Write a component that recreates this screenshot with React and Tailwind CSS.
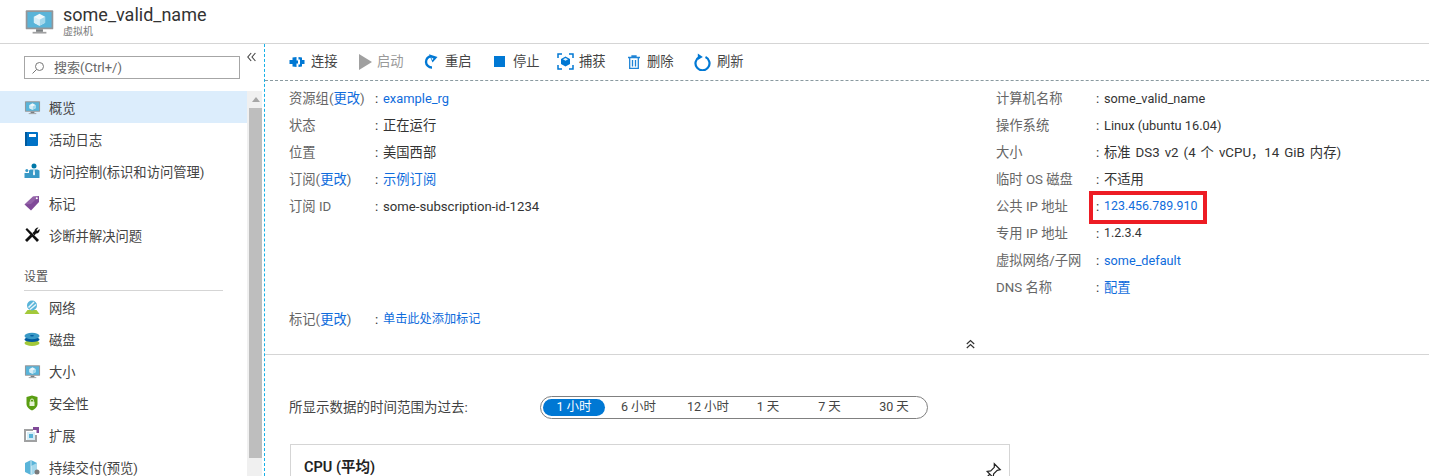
const FONT = "font-['Roboto','Noto_Sans_CJK_SC',sans-serif]";

function VmIcon({ size = 36 }) {
  return (
    <svg width={size} height={size} viewBox="0 0 36 36">
      <rect x="2" y="5" width="32" height="22" rx="1" fill="#949699" />
      <rect x="4" y="7" width="28" height="18" fill="#59b4d9" />
      <path d="M18 9l6.500 3.500v7L18 23l-6.500-3.500v-7z" fill="#fff" opacity=".9" />
      <path d="M18 16l6.500-3.500v7L18 23z" fill="#a5d8ec" />
      <path d="M18 16v7l-6.500-3.500v-7z" fill="#d7eef7" />
      <rect x="14" y="27" width="8" height="3" fill="#7a7e81" />
      <rect x="10" y="30" width="16" height="2" fill="#a0a1a2" />
    </svg>
  );
}

const icons = {
  vm: <VmIcon size={17} />,
  log: (
    <svg width="16" height="16" viewBox="0 0 16 16">
      <rect x="1" y="1" width="13" height="14" rx="1" fill="#0072c6" />
      <rect x="1" y="1" width="2" height="14" fill="#005a9e" />
      <rect x="5" y="3" width="7" height="3" fill="#fff" />
    </svg>
  ),
  iam: (
    <svg width="16" height="16" viewBox="0 0 16 16">
      <circle cx="10" cy="3" r="2.500" fill="#0078a8" />
      <path d="M6.500 6.500h7l2 1v7.500H5V7.500z" fill="#3999c6" />
      <circle cx="2.800" cy="7.500" r="1.500" fill="#3999c6" />
      <path d="M0.500 10h4.500v5H0.500z" fill="#3999c6" />
      <path d="M9.500 6.500h1l.5 5-1 1-1-1z" fill="#fff" />
    </svg>
  ),
  tag: (
    <svg width="16" height="16" viewBox="0 0 16 16">
      <path d="M0.500 9.500L9 1.500l6-.500v6l-8 8.500z" fill="#804998" />
      <path d="M0.500 9.500L9 1.500l6-.500L7 9z" fill="#a67bb8" opacity=".5" />
      <circle cx="12.800" cy="3.200" r="1" fill="#fff" />
    </svg>
  ),
  tools: (
    <svg width="16" height="16" viewBox="0 0 16 16">
      <path d="M1.500 2.500l1.500-1.500 12 12-2 2z" fill="#111" />
      <path d="M1 13l5.500-5.500 2 2L3 15z" fill="#111" />
      <path d="M8.500 6l2-2c0-1.500 1.500-3.500 4-3.500L12.500 3l.7 1L15.500 2c.5 2.500-1 4.500-3.500 4.500L10.500 8.500z" fill="#111" />
    </svg>
  ),
  net: (
    <svg width="16" height="16" viewBox="0 0 16 16">
      <path d="M0.500 15l3-4h9l3 4z" fill="#a3c93a" />
      <circle cx="8" cy="6.500" r="5" fill="#59b4d9" />
      <path d="M4.500 8.500L10 3M6 10.500l6-5" stroke="#e8f5fa" strokeWidth="1.500" />
    </svg>
  ),
  disk: (
    <svg width="16" height="16" viewBox="0 0 16 16">
      <ellipse cx="8" cy="12" rx="7.500" ry="3" fill="#a3c93a" />
      <ellipse cx="8" cy="8.500" rx="7.500" ry="2.500" fill="#005a9e" />
      <ellipse cx="8" cy="5" rx="7.500" ry="3.200" fill="#3999c6" />
      <ellipse cx="8" cy="4.800" rx="2" ry=".8" fill="#005a9e" />
    </svg>
  ),
  shield: (
    <svg width="16" height="16" viewBox="0 0 16 16">
      <path d="M8 .500L13.500 2v7c0 3-3 5.500-5.500 6.500C5.500 14.500 2.500 12 2.500 9V2z" fill="#5a9e12" />
      <rect x="5.500" y="6.500" width="5" height="4.500" rx=".5" fill="#e6f3d4" />
      <path d="M6.500 6.500V5.500a1.500 1.500 0 013 0v1" stroke="#e6f3d4" fill="none" />
    </svg>
  ),
  ext: (
    <svg width="16" height="16" viewBox="0 0 16 16">
      <path d="M0 2h9v2H2v9h9V8h2v7H0z" fill="#a0a1a2" />
      <rect x="3" y="5" width="8" height="8" fill="#d7eef7" />
      <rect x="5" y="7" width="4" height="4" fill="#59b4d9" />
      <path d="M9 0h6v6h-2.500V3H9z" fill="#804998" />
    </svg>
  ),
  cd: (
    <svg width="16" height="16" viewBox="0 0 16 16">
      <path d="M1 4l6-3 6 3v9l-6 3-6-3z" fill="#59b4d9" />
      <path d="M7 7l6-3v9l-6 3z" fill="#a5d8ec" />
      <path d="M7 1v15" stroke="#fff" strokeWidth=".7" />
      <circle cx="13" cy="13" r="2.500" fill="#7a7a7a" />
    </svg>
  ),
};

function NavItem({ icon, label, active }) {
  return (
    <div className={`flex h-8 items-center pl-6 text-[13.3px] text-[#444] ${active ? "bg-[#dcedfc]" : ""}`}>
      <span className="flex w-[25px] shrink-0">{icons[icon]}</span>
      <span className="whitespace-nowrap pt-[4px]">{label}</span>
    </div>
  );
}

function Sidebar() {
  return (
    <aside className="relative flex w-[264px] shrink-0 flex-col overflow-hidden">
      <button className="absolute right-[8px] top-[8px] text-[#444]">
        <svg width="9" height="10" viewBox="0 0 9 10" fill="none" stroke="#444" strokeWidth="1.100">
          <path d="M4.200 1L.8 5l3.400 4M8.400 1L5 5l3.400 4" />
        </svg>
      </button>
      <div className="pb-[12px] pl-6 pr-6 pt-3">
        <div className="flex h-[23px] w-[216px] items-center border border-[#a6a6a6] pl-[6px] text-[13px] text-[#666]">
          <svg width="14" height="14" viewBox="0 0 14 14" fill="none" stroke="#777" strokeWidth="1">
            <circle cx="8.500" cy="5.500" r="4" />
            <path d="M5.500 8.500L1.500 12.500" />
          </svg>
          <span className="ml-[9px]">搜索(Ctrl+/)</span>
        </div>
      </div>
      <div className="flex min-h-0 flex-1">
        <nav className="w-[247px] shrink-0">
          <NavItem icon="vm" label="概览" active />
          <NavItem icon="log" label="活动日志" />
          <NavItem icon="iam" label="访问控制(标识和访问管理)" />
          <NavItem icon="tag" label="标记" />
          <NavItem icon="tools" label="诊断并解决问题" />
          <div className="ml-6 mr-6 mt-[14px] border-b border-[#d5d5d5] pb-[4px] pt-[3px] text-xs leading-[18px] text-[#555]">设置</div>
          <NavItem icon="net" label="网络" />
          <NavItem icon="disk" label="磁盘" />
          <NavItem icon="vm" label="大小" />
          <NavItem icon="shield" label="安全性" />
          <NavItem icon="ext" label="扩展" />
          <NavItem icon="cd" label="持续交付(预览)" />
        </nav>
        <div className="flex w-[15px] flex-col bg-[#f0f0f0]">
          <div className="flex h-[17px] items-center justify-center pl-[2px]">
            <svg width="8" height="5" viewBox="0 0 8 5"><path d="M4 0l4 5H0z" fill="#a6a6a6" /></svg>
          </div>
          <div className="ml-[2px] h-[350px] bg-[#bebebe]" />
        </div>
      </div>
    </aside>
  );
}

function ToolItem({ icon, label, disabled, width }) {
  return (
    <div className={`flex items-center ${width} ${disabled ? "text-[#999]" : "text-[#444]"}`}>
      {icon}
      <span className="pt-[1px]">{label}</span>
    </div>
  );
}

function Toolbar() {
  const blue = "#0078d4";
  return (
    <div className="flex h-[37px] shrink-0 items-center border-b border-dashed border-b-[#8a9aa0] pb-[1px] pl-6 text-[13.3px]">
      <ToolItem
        width="w-[69px]"
        label="连接"
        icon={
          <svg className="mr-[6px]" width="16" height="16" viewBox="0 0 16 16" fill={blue}>
            <path d="M.5 6H3.500V3.500L7.500 3v3.500H9v3H7.500V13l-4-.500V10H.5z" />
            <path d="M15.500 6H13V3.500L9.500 3v2.500h1.500v5H9.500V13l3.500-.500V10h2.500z" />
          </svg>
        }
      />
      <ToolItem
        width="w-[65px]"
        label="启动"
        disabled
        icon={
          <svg className="mr-[4px]" width="15" height="16" viewBox="0 0 15 16" fill="#a0a0a0">
            <path d="M1 0l13 8-13 8z" />
          </svg>
        }
      />
      <ToolItem
        width="w-[71px]"
        label="重启"
        icon={
          <svg className="mr-[6px]" width="16" height="16" viewBox="0 0 16 16" fill="none" stroke={blue} strokeWidth="2.400">
            <path d="M8 2.200A5.800 5.800 0 0 0 3 8a5.800 5.800 0 0 0 6 5.500" />
            <path d="M6 .200L14.500 3 9.500 8.500z" fill={blue} stroke="none" />
            <path d="M8.500 3.500l2 1.200-1.500 1.500z" fill="#fff" stroke="none" />
          </svg>
        }
      />
      <ToolItem
        width="w-[63px]"
        label="停止"
        icon={<span className="mr-[8px] block h-[11px] w-[11px] bg-[#0078d4]" />}
      />
      <ToolItem
        width="w-[71px]"
        label="捕获"
        icon={
          <svg className="mr-[5px]" width="17" height="17" viewBox="0 0 17 17">
            <path d="M1 5V1h4M12 1h4v4M16 12v4h-4M5 16H1v-4" fill="none" stroke={blue} strokeWidth="1.500" />
            <path d="M8.500 3.500l4.500 2.500v5l-4.500 2.500L4 11V6z" fill={blue} />
            <path d="M8.500 5l2.500 1.300-2.500 1.400L6 6.300z" fill="#e6f2fb" />
          </svg>
        }
      />
      <ToolItem
        width="w-[66px]"
        label="删除"
        icon={
          <svg className="mr-[7px]" width="12" height="14" viewBox="0 0 12 14" fill="none" stroke="#1f84d6" strokeWidth="1.300">
            <path d="M0 2.500h12M4 2.500V1h4v1.500M1.700 2.500V13.300h8.600V2.500M4.500 5v6.500M7.500 5v6.500" />
          </svg>
        }
      />
      <ToolItem
        label="刷新"
        icon={
          <svg className="mr-[6px]" width="17" height="18" viewBox="0 0 17 18" fill="none" stroke={blue} strokeWidth="2.200">
            <path d="M5.500 4a7 7 0 1 0 6 0" />
            <path d="M3.800 .5v6.500l5-3z" fill={blue} stroke="none" />
          </svg>
        }
      />
    </div>
  );
}

function Row({ label, value, link, labelW, colonW, valueCls = "", children }) {
  return (
    <div className="relative flex h-[27px] items-center whitespace-nowrap text-[13.3px] text-[#666]">
      <span className={`${labelW} shrink-0`}>{label}</span>
      <span className={`${colonW} shrink-0 text-[#333]`}>:</span>
      <span className={`${link ? "text-[#0f6cdc]" : "text-[#333]"} ${valueCls}`}>{value}</span>
      {children}
    </div>
  );
}

const Change = ({ t }) => (
  <>
    {t}(<span className="text-[#0f6cdc]">更改</span>)
  </>
);

function Essentials() {
  const L = "w-[84px]";
  const LC = "w-[10px] pl-[2px]";
  const R = "w-[100px]";
  const RC = "w-[8px]";
  return (
    <div className="flex shrink-0 flex-col">
      <div className="flex pl-6 pt-[4px]">
        <div className="w-[707px] shrink-0">
          <Row labelW={L} colonW={LC} label={<Change t="资源组" />} value="example_rg" valueCls="text-[12.9px]" link />
          <Row labelW={L} colonW={LC} label="状态" value="正在运行" />
          <Row labelW={L} colonW={LC} label="位置" value="美国西部" />
          <Row labelW={L} colonW={LC} label={<Change t="订阅" />} value="示例订阅" link />
          <Row labelW={L} colonW={LC} label="订阅 ID" value="some-subscription-id-1234" valueCls="text-[13.15px]" />
        </div>
        <div>
          <Row labelW={R} colonW={RC} label="计算机名称" value="some_valid_name" valueCls="text-[12.7px]" />
          <Row labelW={R} colonW={RC} label="操作系统" value="Linux (ubuntu 16.04)" valueCls="text-[12.8px]" />
          <Row labelW={R} colonW={RC} label="大小" value="标准 DS3 v2 (4 个 vCPU，14 GiB 内存)" valueCls="[word-spacing:1.700px]" />
          <Row labelW={R} colonW={RC} label="临时 OS 磁盘" value="不适用" />
          <Row labelW={R} colonW={RC} label="公共 IP 地址" value="123.456.789.910" valueCls="text-[12.4px]" link>
            <span className="absolute left-[93px] top-[-2px] h-[33px] w-[118px] border-4 border-[#ed1c24]" />
          </Row>
          <Row labelW={R} colonW={RC} label="专用 IP 地址" value="1.2.3.4" valueCls="text-[12.4px]" />
          <Row labelW={R} colonW={RC} label="虚拟网络/子网" value="some_default" valueCls="text-[12.7px]" link />
          <Row labelW={R} colonW={RC} label="DNS 名称" value="配置" link />
        </div>
      </div>
      <div className="pl-6 pt-[5px]">
        <Row labelW={L} colonW={LC} label={<Change t="标记" />} value="单击此处添加标记" valueCls="text-[12.2px]" link />
      </div>
      <div className="flex h-[21px] items-center pl-[701px]">
        <svg width="9" height="10" viewBox="0 0 9 10" fill="none" stroke="#333" strokeWidth="1.200">
          <path d="M.8 5l3.700-3.500L8.200 5M.8 9l3.700-3.500L8.200 9" />
        </svg>
      </div>
    </div>
  );
}

function Range() {
  const opts = [
    ["1 小时", "w-[62px]", true],
    ["6 小时", "w-[67px]"],
    ["12 小时", "w-[72px]"],
    ["1 天", "w-[48px]"],
    ["7 天", "w-[75px]"],
    ["30 天", "w-[54px]"],
  ];
  return (
    <div className="flex items-center pl-6 pt-[41px] text-[12.5px] text-[#444]">
      <span className="w-[251px] shrink-0 text-[13.5px]">所显示数据的时间范围为过去:</span>
      <div className="flex h-[23px] w-[388px] items-center rounded-full border border-[#808080] pl-[2px]">
        {opts.map(([t, w, on]) => (
          <span key={t} className={`flex h-[17px] items-center justify-center rounded-full ${w} ${on ? "bg-[#0078d4] text-white" : ""}`}>
            {t}
          </span>
        ))}
      </div>
    </div>
  );
}

export default function App() {
  return (
    <div className={`flex h-[476px] w-[1429px] flex-col overflow-hidden bg-white ${FONT}`}>
      <header className="flex h-[44px] shrink-0 items-center border-b border-[#d5d5d5] pl-6">
        <VmIcon size={31} />
        <div className="ml-[8px] flex flex-col">
          <span className="text-[18px] leading-[20px] text-[#333]">some_valid_name</span>
          <span className="text-[10px] leading-[13px] text-[#777]">虚拟机</span>
        </div>
      </header>
      <div className="flex min-h-0 flex-1">
        <Sidebar />
        <main className="flex min-w-0 flex-1 flex-col border-l border-dashed border-l-[#16b1e8]">
          <Toolbar />
          <Essentials />
          <div className="border-t border-[#d5d5d5]">
            <Range />
            <div className="ml-[25px] mt-[25px] h-[60px] w-[720px] border border-[#d5d5d5] px-[13px] pt-[14px]">
              <div className="flex items-start justify-between">
                <span className="text-[14.5px] font-semibold leading-[18px] text-[#222]">CPU (平均)</span>
                <svg className="-mr-[6px] mt-[3px]" width="19" height="19" viewBox="0 0 16 16" fill="none" stroke="#222">
                  <path d="M9.500 1.500l5 5-2.500.5-3 3-.5 3-5-5 3-.5 3-3zM5.500 10.500L1.500 14.500" />
                </svg>
              </div>
            </div>
          </div>
        </main>
      </div>
    </div>
  );
}
